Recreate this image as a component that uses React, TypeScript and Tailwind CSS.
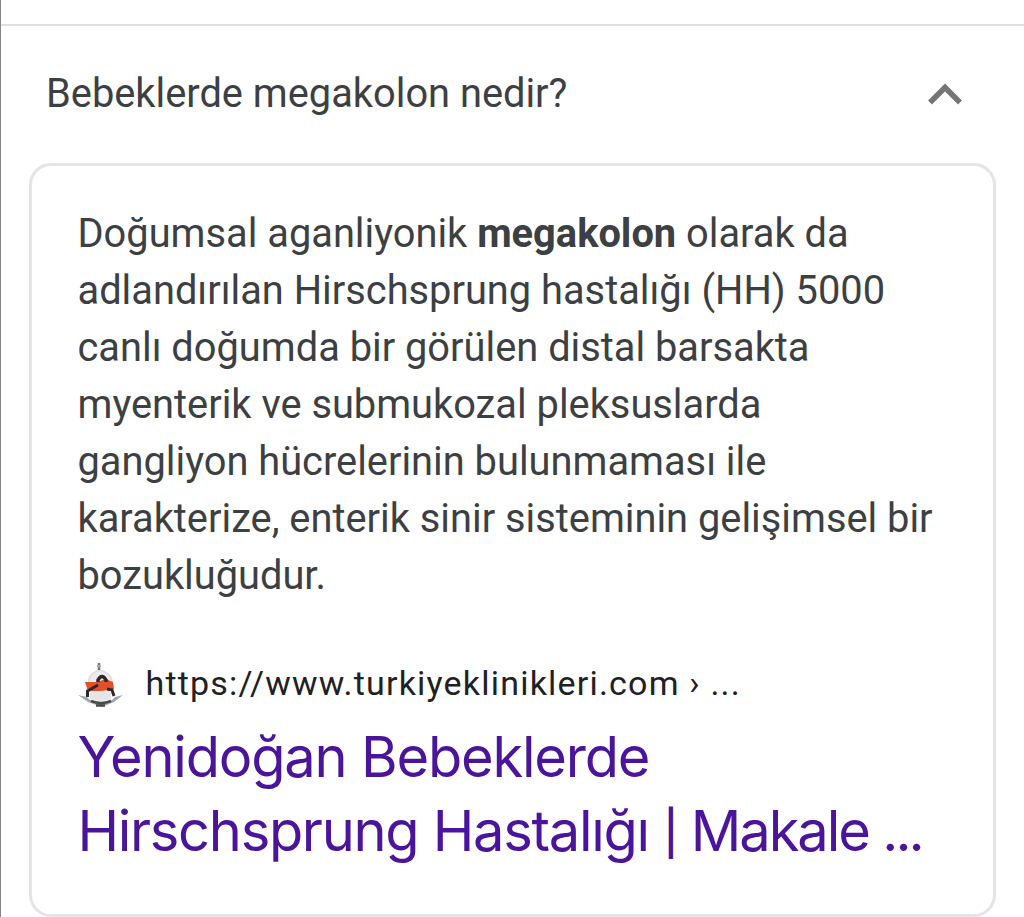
const answerLines = [
  "adlandırılan Hirschsprung hastalığı (HH) 5000",
  "canlı doğumda bir görülen distal barsakta",
  "myenterik ve submukozal pleksuslarda",
  "gangliyon hücrelerinin bulunmaması ile",
  "karakterize, enterik sinir sisteminin gelişimsel bir",
  "bozukluğudur.",
];

function SiteIcon() {
  return (
    <svg viewBox="0 0 46 46" className="w-[46px] h-[46px] flex-shrink-0">
      <path d="M11 25 Q8 12 22 8 Q36 12 34 25 Z" fill="#ededee" stroke="#dcdcdf" strokeWidth="1.500" />
      <path d="M21 1 V8" stroke="#77777b" strokeWidth="2.500" />
      <path d="M19 4 H23" stroke="#aaa" strokeWidth="2" />
      <path d="M7 20 L19 20 L28 17 L35 20 L36 27 Q22 30 10 29 Z" fill="#e2502a" />
      <path d="M20 20 V18 Q24 11 28 18 V20" stroke="#28282d" strokeWidth="3.500" fill="none" />
      <path d="M9.500 35 V29 L20 23 M36 34 L34 28 L29 27" stroke="#2a292d" strokeWidth="3" fill="none" />
      <path d="M12 29 H33 V37 Q23 41 12 37 Z" fill="#e6e6e8" />
      <path d="M0 33 L9 35 L12 38 Q23 42 34 38 L37 35 L45 33 L36 40 L24 45 L10 40 Z" fill="#a5a5a8" />
      <path d="M13 39 Q23 43 33 39 M18 43.500 H27" stroke="#4b4b4e" strokeWidth="2.500" fill="none" />
    </svg>
  );
}

export default function App() {
  return (
    <div className="h-[917px] overflow-hidden bg-white border-l border-[#858585] font-[Roboto,sans-serif] text-[#3c4043]">
      <div className="h-[26px] border-b-2 border-[#dedfe0]" />
      <button type="button" className="flex w-full h-[136px] items-center justify-between pl-[45px] pr-[62px] text-left">
        <span className="text-[39.8px] whitespace-nowrap">Bebeklerde megakolon nedir?</span>
        <svg viewBox="0 0 34 22" className="w-[34px] h-[22px]" fill="none">
          <path d="M2 19.500 L17 4.500 L32 19.500" stroke="#757575" strokeWidth="5.500" />
        </svg>
      </button>

      <div className="mt-px ml-[28px] w-[967px] h-[754px] rounded-[22px] border-[3px] border-[#e3e4e5] pl-[45.5px] pt-[38.5px]">
        <p className="text-[39.8px] leading-[57px] whitespace-nowrap">
          <span className="block">
            Doğumsal aganliyonik <b>megakolon</b> olarak da
          </span>
          {answerLines.map((line) => (
            <span key={line} className="block">{line}</span>
          ))}
        </p>

        <div className="mt-[58.5px] h-[46px] flex items-center gap-[22px]">
          <SiteIcon />
          <span className="-mt-[3px] text-[34px] tracking-[1.2px] text-[#202124] whitespace-nowrap">
            https://www.turkiyeklinikleri.com › ...
          </span>
        </div>
        <h3 className="mt-[12px] font-[Inter,sans-serif] text-[56px] leading-[74px] text-[#4a149b] whitespace-nowrap">
          <span className="block tracking-[-1.2px]">Yenidoğan Bebeklerde</span>
          <span className="block tracking-[-1.3px]">
            Hirschsprung Hastalığı <span className="inline-block w-[14px] text-[44px] font-medium tracking-normal align-[2px] leading-none">|</span>
            <span className="tracking-[-2.1px]"> Makale </span>
            <span className="tracking-[-3px]">...</span>
          </span>
        </h3>
      </div>
    </div>
  );
}
